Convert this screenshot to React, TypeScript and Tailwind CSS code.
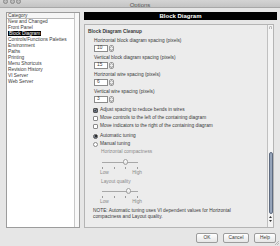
import React from 'react';

const categories = [
  'New and Changed',
  'Front Panel',
  'Block Diagram',
  'Controls/Functions Palettes',
  'Environment',
  'Paths',
  'Printing',
  'Menu Shortcuts',
  'Revision History',
  'VI Server',
  'Web Server',
];

function SpinBox({ value }: { value: string }) {
  return (
    <div className="flex h-[7px] items-stretch gap-[1px] pl-[9px]">
      <div className="flex w-[14px] items-center border border-[#8c8c8c] bg-white pl-[2px] leading-none">{value}</div>
      <div className="flex w-[5px] flex-col items-center justify-center rounded-[2px] border border-[#9a9a9a] bg-gradient-to-b from-white to-[#dcdcdc]">
        <svg width="3" height="5" viewBox="0 0 3 5">
          <path d="M0.3 1.8 L1.5 0.5 L2.7 1.8" fill="none" stroke="#555" strokeWidth="0.5" />
          <path d="M0.3 3.2 L1.5 4.5 L2.7 3.2" fill="none" stroke="#555" strokeWidth="0.5" />
        </svg>
      </div>
    </div>
  );
}

function Check({ checked, label }: { checked?: boolean; label: string }) {
  return (
    <div className="flex h-[8px] items-center gap-[2px] pl-[8px]">
      <div
        className={
          checked
            ? 'flex h-[5px] w-[5px] items-center justify-center rounded-[1px] border border-[#555] bg-gradient-to-b from-[#9aa3b0] to-[#5d6674]'
            : 'h-[5px] w-[5px] rounded-[1px] border border-[#8a8a8a] bg-white'
        }
      >
        {checked && (
          <svg width="4" height="4" viewBox="0 0 4 4">
            <path d="M0.5 2 L1.6 3.2 L3.6 0.4" fill="none" stroke="#111" strokeWidth="0.8" />
          </svg>
        )}
      </div>
      <span>{label}</span>
    </div>
  );
}

function Radio({ checked, label }: { checked?: boolean; label: string }) {
  return (
    <div className="flex h-[8px] items-center gap-[2px] pl-[8px]">
      <div
        className={
          checked
            ? 'flex h-[5px] w-[5px] items-center justify-center rounded-full border border-[#555] bg-gradient-to-b from-[#9aa3b0] to-[#5d6674]'
            : 'h-[5px] w-[5px] rounded-full border border-[#8a8a8a] bg-white'
        }
      >
        {checked && <div className="h-[2px] w-[2px] rounded-full bg-[#111]" />}
      </div>
      <span>{label}</span>
    </div>
  );
}

function Slider({ pos }: { pos: number }) {
  return (
    <div className="pl-[17px]">
      <div className="relative h-[6px] w-[36px]">
        <div className="absolute left-0 right-0 top-[2.5px] h-[1px] bg-[#a8a8a8]" />
        <div
          className="absolute top-0 h-[6px] w-[5px] rounded-full border border-[#a0a0a0] bg-gradient-to-b from-white to-[#e0e0e0]"
          style={{ left: pos }}
        />
      </div>
      <div className="mt-[2px] flex h-[3px] w-[36px] justify-between">
        <div className="h-[2px] w-[1px] bg-[#9a9a9a]" />
        <div className="h-[2px] w-[1px] bg-[#9a9a9a]" />
        <div className="h-[2px] w-[1px] bg-[#9a9a9a]" />
        <div className="h-[2px] w-[1px] bg-[#9a9a9a]" />
      </div>
      <div className="-ml-[2px] flex h-[6px] w-[42px] items-center justify-between text-[#8a8a8a]">
        <span>Low</span>
        <span>High</span>
      </div>
    </div>
  );
}

function Button({ label, w }: { label: string; w: string }) {
  return (
    <div
      className={`flex h-[10px] ${w} items-center justify-center rounded-[2px] border border-[#9c9c9c] bg-gradient-to-b from-white to-[#e6e6e6]`}
    >
      {label}
    </div>
  );
}

export default function App() {
  return (
    <div className="flex h-[246px] w-[280px] flex-col overflow-hidden bg-[#e6e6e6] font-['Liberation_Sans',Arial,sans-serif] text-[4.8px] leading-[6px] text-[#3a3a3a]">
      {/* title bar */}
      <div className="relative flex h-[8px] items-end overflow-hidden border-b border-[#a8a8a8] bg-gradient-to-b from-[#d4d4d4] to-[#c4c4c4]">
        <div className="absolute left-[3px] top-[-1px] flex gap-[1.5px]">
          <div className="h-[5px] w-[5px] rounded-full border border-[#8a8a8a] bg-[#bdbdbd]" />
          <div className="h-[5px] w-[5px] rounded-full border border-[#8a8a8a] bg-[#bdbdbd]" />
          <div className="h-[5px] w-[5px] rounded-full border border-[#8a8a8a] bg-[#bdbdbd]" />
        </div>
        <div className="-mb-[1px] w-full text-center text-[6px] leading-[6px] text-[#555]">Options</div>
      </div>

      {/* body */}
      <div className="flex flex-1 gap-[4px] pl-[6px] pr-[3px] pt-[4px]">
        {/* category list */}
        <div className="flex h-[216px] w-[74px] border border-[#9c9c9c] bg-white">
          <div className="flex flex-1 flex-col">
            <div className="h-[6px] border-b border-[#b8b8b8] bg-[#f6f6f6] pl-[1px] leading-[5px]">Category</div>
            {categories.map((c) => (
              <div key={c} className="h-[6px] pl-[1px]">
                {c === 'Block Diagram' ? <span className="bg-black px-[1px] text-white">{c}</span> : c}
              </div>
            ))}
          </div>
          <div className="w-[5px] border-l border-[#c8c8c8] bg-[#f8f8f8]" />
        </div>

        {/* right panel */}
        <div className="flex flex-1 flex-col">
          <div className="flex h-[8px] items-center justify-center bg-black text-[6px] font-bold text-white">Block Diagram</div>
          <div className="mr-[3px] mt-[4px] flex h-[204px] border border-[#b4b4b4] bg-[#ececec]">
            <div className="flex-1 pt-[4px]">
              <div className="h-[6px] pl-[3px] font-bold">Block Diagram Cleanup</div>
              <div className="mt-[3px] h-[6px] pl-[9px]">Horizontal block diagram spacing (pixels)</div>
              <div className="mt-[1px]"><SpinBox value="10" /></div>
              <div className="mt-[3px] h-[6px] pl-[9px]">Vertical block diagram spacing (pixels)</div>
              <div className="mt-[1px]"><SpinBox value="15" /></div>
              <div className="mt-[3px] h-[6px] pl-[9px]">Horizontal wire spacing (pixels)</div>
              <div className="mt-[1px]"><SpinBox value="6" /></div>
              <div className="mt-[3px] h-[6px] pl-[9px]">Vertical wire spacing (pixels)</div>
              <div className="mt-[1px]"><SpinBox value="3" /></div>
              <div className="mt-[3px]">
                <Check checked label="Adjust spacing to reduce bends in wires" />
                <Check label="Move controls to the left of the containing diagram" />
                <Check label="Move indicators to the right of the containing diagram" />
              </div>
              <div className="mt-[2px]">
                <Radio checked label="Automatic tuning" />
                <Radio label="Manual tuning" />
              </div>
              <div className="mt-[1px] h-[6px] pl-[16px] text-[#8a8a8a]">Horizontal compactness</div>
              <div className="mt-[4px]"><Slider pos={21} /></div>
              <div className="mt-[3px] h-[6px] pl-[16px] text-[#8a8a8a]">Layout quality</div>
              <div className="mt-[3px]"><Slider pos={24} /></div>
              <div className="mt-[3px] pl-[8px]">
                <div className="h-[6px]">NOTE: Automatic tuning uses VI dependent values for Horizontal</div>
                <div className="h-[6px]">compactness and Layout quality.</div>
              </div>
            </div>
            {/* scrollbar */}
            <div className="flex w-[6px] flex-col border-l border-[#c0c0c0] bg-[#f4f4f4]">
              <div className="mx-[1px] mt-[1px] h-[3px] rounded-t-full border border-b-0 border-[#b8b8b8]" />
              <div className="h-[123px]" />
              <div className="mx-[0.5px] h-[62px] rounded-full border border-[#5e6b80] bg-[repeating-linear-gradient(90deg,#7f8ea6_0px,#a9b6c9_1px,#8796ad_2px)]" />
              <div className="flex h-[10px] flex-col items-center justify-center gap-[2px]">
                <svg width="3" height="2" viewBox="0 0 3 2"><path d="M0 2 L1.5 0 L3 2 Z" fill="#333" /></svg>
                <svg width="3" height="2" viewBox="0 0 3 2"><path d="M0 0 L1.5 2 L3 0 Z" fill="#333" /></svg>
              </div>
            </div>
          </div>
        </div>
      </div>

      {/* buttons */}
      <div className="relative flex h-[15px] items-start justify-end gap-[5px] pr-[4px] pt-[2px]">
        <Button label="OK" w="w-[22px]" />
        <Button label="Cancel" w="w-[26px]" />
        <Button label="Help" w="w-[22px]" />
        <svg className="absolute bottom-[1px] right-[1px]" width="5" height="5" viewBox="0 0 5 5">
          <path d="M1 5 L5 1 M3 5 L5 3" stroke="#999" strokeWidth="0.6" />
        </svg>
      </div>
    </div>
  );
}
